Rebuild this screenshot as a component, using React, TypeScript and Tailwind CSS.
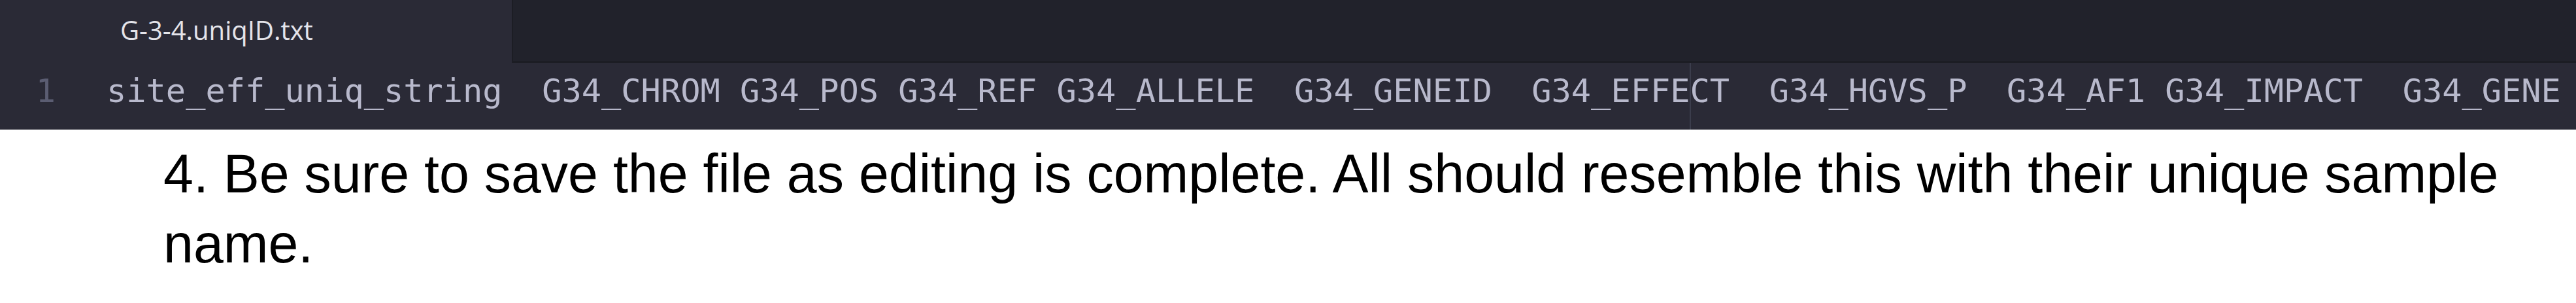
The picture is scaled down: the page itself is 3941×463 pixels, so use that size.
import React from "react";

const HEADER_LINE =
  "site_eff_uniq_string\tG34_CHROM\tG34_POS\tG34_REF\tG34_ALLELE\tG34_GENEID\tG34_EFFECT\tG34_HGVS_P\tG34_AF1\tG34_IMPACT\tG34_GENE";

function TabBar() {
  return (
    <div className="flex h-[96px] bg-[#21222b]">
      <div className="flex w-[783px] items-start bg-[#2a2a36] pl-[184px] pt-[21px]">
        <span className="font-['Open_Sans',sans-serif] text-[40px] leading-[50px] text-[#e4e4ea]">
          G-3-4.uniqID.txt
        </span>
      </div>
      <div className="flex-1 border-b-[3px] border-l-[2px] border-[#1c1d24] bg-[#21222b]" />
    </div>
  );
}

function Editor() {
  return (
    <div className="relative h-[102px] overflow-hidden bg-[#2a2a36] pt-[8px]">
      {/* wrap guide */}
      <div className="absolute top-0 bottom-0 left-[2585px] w-[2px] bg-[#3b3d4c]" />
      <div className="flex font-['DejaVu_Sans_Mono',monospace] text-[50.3px] leading-[70px]">
        <span className="w-[85px] text-right text-[#5b5d72]">1</span>
        <pre className="ml-[78px] font-['DejaVu_Sans_Mono',monospace] whitespace-pre text-[#b8b9cc] [tab-size:2]">
          {HEADER_LINE}
        </pre>
      </div>
    </div>
  );
}

export default function App() {
  return (
    <div className="h-[463px] w-[3941px] overflow-hidden bg-white">
      <TabBar />
      <Editor />
      <p className="mt-[14px] w-full pl-[250px] pr-[30px] font-['Liberation_Sans',Arial,sans-serif] text-[82.5px] leading-[107px] text-black">
        4. Be sure to save the file as editing is complete. All should resemble this with their unique sample name.
      </p>
    </div>
  );
}
